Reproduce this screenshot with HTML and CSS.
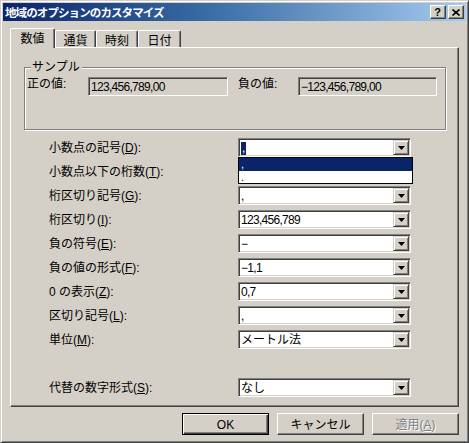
FILE: index.html
```html
<!DOCTYPE html>
<html lang="ja">
<head>
<meta charset="utf-8">
<title>地域のオプションのカスタマイズ</title>
<link rel="stylesheet" href="styles.css">
</head>
<body>
<div class="window">
  <div class="titlebar">
    <span class="title">地域のオプションのカスタマイズ</span>
    <div class="caption-buttons">
      <div class="cap-btn help">?</div>
      <div class="cap-btn close">
        <svg width="8" height="7" viewBox="0 0 8 7"><path d="M0.5 0.5 L7.5 6.5 M7.5 0.5 L0.5 6.5" stroke="#000" stroke-width="1.6" fill="none"/></svg>
      </div>
    </div>
  </div>
  <div class="content">
    <div class="tabs">
      <div class="tab active t1">数値</div>
      <div class="tab t2">通貨</div>
      <div class="tab t3">時刻</div>
      <div class="tab t4">日付</div>
    </div>
    <div class="panel">
      <div class="group">
        <span class="legend">サンプル</span>
        <div class="sample-grid">
          <span class="sample-label">正の値:</span>
          <div class="readonly num">123,456,789,00</div>
          <span class="sample-label">負の値:</span>
          <div class="readonly num">−123,456,789,00</div>
        </div>
      </div>
      <div class="form">
        <label class="lbl">小数点の記号(<u>D</u>):</label>
        <div class="combo">
          <div class="combo-text"><span class="sel">,</span></div>
          <div class="drop-btn"><svg width="7" height="4" viewBox="0 0 7 4"><path d="M0 0H7L3.5 4Z" fill="#000"/></svg></div>
          <div class="droplist">
            <div class="item hl">,</div>
            <div class="item">.</div>
          </div>
        </div>

        <label class="lbl">小数点以下の桁数(<u>T</u>):</label>
        <div class="combo">
          <div class="combo-text"></div>
          <div class="drop-btn"><svg width="7" height="4" viewBox="0 0 7 4"><path d="M0 0H7L3.5 4Z" fill="#000"/></svg></div>
        </div>

        <label class="lbl">桁区切り記号(<u>G</u>):</label>
        <div class="combo">
          <div class="combo-text">,</div>
          <div class="drop-btn"><svg width="7" height="4" viewBox="0 0 7 4"><path d="M0 0H7L3.5 4Z" fill="#000"/></svg></div>
        </div>

        <label class="lbl">桁区切り(<u>I</u>):</label>
        <div class="combo">
          <div class="combo-text num">123,456,789</div>
          <div class="drop-btn"><svg width="7" height="4" viewBox="0 0 7 4"><path d="M0 0H7L3.5 4Z" fill="#000"/></svg></div>
        </div>

        <label class="lbl">負の符号(<u>E</u>):</label>
        <div class="combo">
          <div class="combo-text">−</div>
          <div class="drop-btn"><svg width="7" height="4" viewBox="0 0 7 4"><path d="M0 0H7L3.5 4Z" fill="#000"/></svg></div>
        </div>

        <label class="lbl">負の値の形式(<u>F</u>):</label>
        <div class="combo">
          <div class="combo-text num">−1,1</div>
          <div class="drop-btn"><svg width="7" height="4" viewBox="0 0 7 4"><path d="M0 0H7L3.5 4Z" fill="#000"/></svg></div>
        </div>

        <label class="lbl">0 の表示(<u>Z</u>):</label>
        <div class="combo">
          <div class="combo-text num">0,7</div>
          <div class="drop-btn"><svg width="7" height="4" viewBox="0 0 7 4"><path d="M0 0H7L3.5 4Z" fill="#000"/></svg></div>
        </div>

        <label class="lbl">区切り記号(<u>L</u>):</label>
        <div class="combo">
          <div class="combo-text">,</div>
          <div class="drop-btn"><svg width="7" height="4" viewBox="0 0 7 4"><path d="M0 0H7L3.5 4Z" fill="#000"/></svg></div>
        </div>

        <label class="lbl">単位(<u>M</u>):</label>
        <div class="combo">
          <div class="combo-text">メートル法</div>
          <div class="drop-btn"><svg width="7" height="4" viewBox="0 0 7 4"><path d="M0 0H7L3.5 4Z" fill="#000"/></svg></div>
        </div>

        <div class="spacer"></div>

        <label class="lbl">代替の数字形式(<u>S</u>):</label>
        <div class="combo">
          <div class="combo-text">なし</div>
          <div class="drop-btn"><svg width="7" height="4" viewBox="0 0 7 4"><path d="M0 0H7L3.5 4Z" fill="#000"/></svg></div>
        </div>
      </div>
    </div>
    <div class="buttons">
      <div class="btn default">OK</div>
      <div class="btn">キャンセル</div>
      <div class="btn disabled">適用(<u>A</u>)</div>
    </div>
  </div>
</div>
</body>
</html>
```
FILE: styles.css
```css
* { box-sizing: border-box; }
html, body { margin: 0; padding: 0; }
body {
  width: 469px;
  height: 443px;
  overflow: hidden;
  background: #d4d0c8;
  font-family: "Liberation Sans", "Noto Sans CJK JP", sans-serif;
  font-size: 12px;
  line-height: 14px;
  color: #000;
}
u { text-decoration: underline; text-underline-offset: 1px; }

.window {
  width: 469px;
  height: 443px;
  background: #d4d0c8;
  border: 1px solid;
  border-color: #d4d0c8 #404040 #404040 #d4d0c8;
  box-shadow: inset 1px 1px 0 #fff, inset -1px -1px 0 #808080;
  padding: 2px;
  display: flex;
  flex-direction: column;
}

.titlebar {
  height: 18px;
  flex: none;
  background: linear-gradient(to right, #0a246a 0%, #3a6ea5 45%, #a6caf0 100%);
  display: flex;
  align-items: center;
  padding: 0 2px 0 2px;
}
.title {
  color: #fff;
  font-weight: bold;
  font-family: "Noto Sans CJK JP", sans-serif;
  font-size: 11.5px;
  letter-spacing: -0.9px;
  line-height: 18px;
}
.caption-buttons {
  margin-left: auto;
  display: flex;
  gap: 2px;
}
.cap-btn {
  width: 16px;
  height: 14px;
  background: #d4d0c8;
  border: 1px solid;
  border-color: #fff #404040 #404040 #fff;
  box-shadow: inset -1px -1px 0 #808080;
  display: flex;
  align-items: center;
  justify-content: center;
}
.cap-btn.help {
  font-family: "Liberation Sans", sans-serif;
  font-weight: bold;
  font-size: 11px;
  line-height: 12px;
  padding-right: 1px;
}

.content {
  flex: 1;
  display: flex;
  flex-direction: column;
  padding: 7px 7px 0 7px;
}

.tabs {
  height: 19px;
  display: flex;
  align-items: flex-end;
  position: relative;
  z-index: 1;
}
.tab {
  height: 17px;
  background: #d4d0c8;
  border-top: 1px solid #fff;
  border-left: 1px solid #fff;
  border-right: 1px solid #404040;
  box-shadow: inset -1px 0 0 #808080;
  border-radius: 2px 2px 0 0;
  font-family: "Noto Sans CJK JP", sans-serif;
  display: flex;
  align-items: center;
  justify-content: center;
  padding-top: 1px;
}
.tab.active {
  height: 20px;
  margin-bottom: -1px;
  padding-bottom: 3px;
}
.t1 { width: 45px; }
.t2 { width: 41px; }
.t3 { width: 42px; }
.t4 { width: 43px; }

.panel {
  height: 360px;
  flex: none;
  border: 1px solid;
  border-color: #fff #404040 #404040 #fff;
  box-shadow: inset -1px -1px 0 #808080;
  padding: 0 0 0 13px;
}

.group {
  position: relative;
  width: 422px;
  height: 63px;
  margin-top: 19px;
  border: 1px solid #808080;
  box-shadow: inset 1px 1px 0 #fff, 1px 1px 0 #fff;
  padding: 9px 0 0 2px;
}
.legend {
  position: absolute;
  top: -8px;
  left: 6px;
  padding: 0 2px 0 1px;
  background: #d4d0c8;
  line-height: 14px;
}
.sample-grid {
  display: grid;
  grid-template-columns: 61px 140px 10px 60px 139px;
}
.sample-grid .readonly:nth-of-type(1) { grid-column: 2; }
.sample-grid .sample-label:nth-of-type(2) { grid-column: 4; }
.sample-label {
  line-height: 14px;
}
.readonly {
  height: 19px;
  border: 1px solid;
  border-color: #808080 #fff #fff #808080;
  box-shadow: inset 1px 1px 0 #404040, inset -1px -1px 0 #d4d0c8;
  padding: 2px 0 0 2px;
  line-height: 14px;
  white-space: nowrap;
}
.num { letter-spacing: -0.7px; }

.form {
  margin-top: 8px;
  margin-left: 25px;
  display: grid;
  grid-template-columns: 189px 173px;
  grid-auto-rows: 19px;
  row-gap: 5px;
}
.lbl {
  display: flex;
  align-items: center;
  white-space: nowrap;
  padding-top: 1px;
}
.spacer { grid-column: 1 / span 2; }

.combo {
  position: relative;
  height: 19px;
  background: #fff;
  border: 1px solid;
  border-color: #808080 #fff #fff #808080;
  box-shadow: inset 1px 1px 0 #404040, inset -1px -1px 0 #d4d0c8;
  padding: 1px;
  display: flex;
}
.combo-text {
  flex: 1;
  padding: 1px 0 0 1px;
  line-height: 14px;
  white-space: nowrap;
}
.sel {
  display: inline-block;
  background: #0a246a;
  color: #fff;
  padding: 0 1px;
  line-height: 13px;
}
.drop-btn {
  width: 16px;
  height: 15px;
  background: #d4d0c8;
  border: 1px solid;
  border-color: #d4d0c8 #404040 #404040 #d4d0c8;
  box-shadow: inset 1px 1px 0 #fff, inset -1px -1px 0 #808080;
  display: flex;
  align-items: center;
  justify-content: center;
  padding-top: 1px;
}
.droplist {
  position: absolute;
  top: 18px;
  left: -1px;
  width: 175px;
  border: 1px solid #000;
  background: #fff;
  z-index: 2;
}
.item {
  height: 12px;
  line-height: 12px;
  font-size: 11px;
  padding-left: 2px;
}
.item.hl {
  height: 13px;
  line-height: 12px;
  background: #0a246a;
  color: #fff;
}

.buttons {
  display: flex;
  justify-content: flex-end;
  gap: 8px;
  margin-top: 6px;
}
.btn {
  width: 87px;
  height: 22px;
  border: 1px solid;
  border-color: #fff #404040 #404040 #fff;
  box-shadow: inset -1px -1px 0 #808080;
  display: flex;
  align-items: center;
  justify-content: center;
  font-family: "Liberation Sans", "Noto Sans CJK JP", sans-serif;
  padding-top: 1px;
}
.btn.default {
  border: 1px solid #000;
  box-shadow: inset 1px 1px 0 #fff, inset -1px -1px 0 #404040, inset -2px -2px 0 #808080;
}
.btn.disabled {
  color: #808080;
  text-shadow: 1px 1px 0 #fff;
}
```
